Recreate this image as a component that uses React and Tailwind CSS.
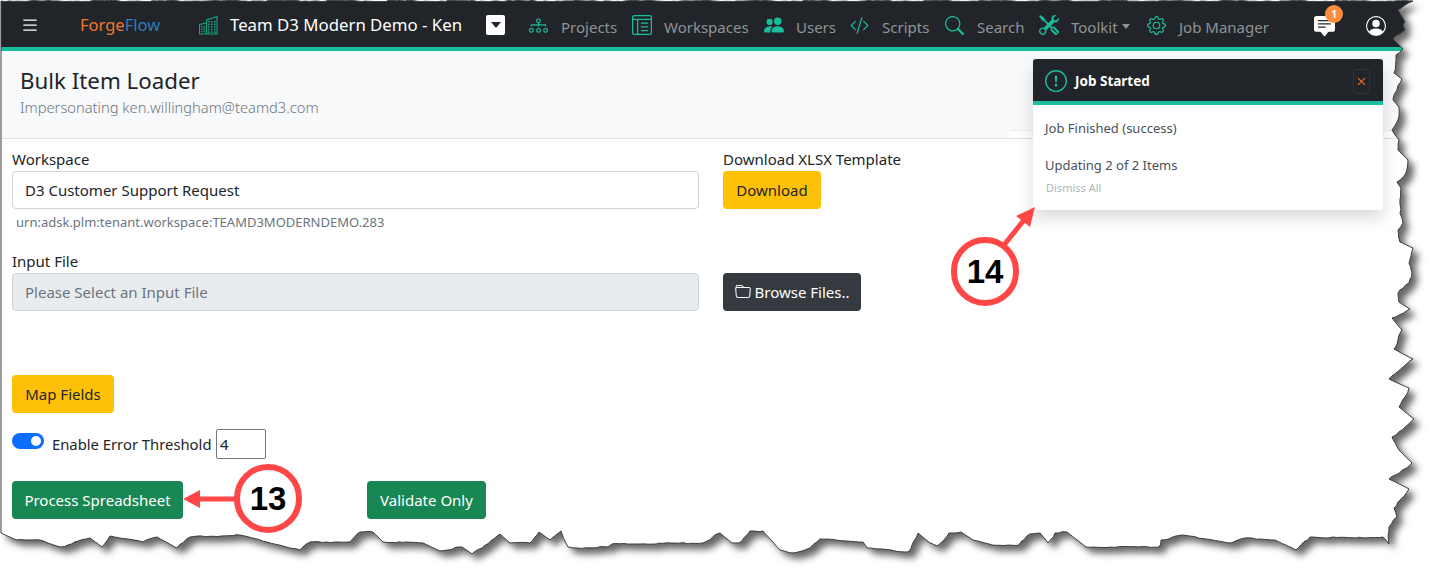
import {
  BsDiagram3,
  BsLayoutTextWindowReverse,
  BsPeopleFill,
  BsCodeSlash,
  BsSearch,
  BsTools,
  BsGear,
  BsChatSquareTextFill,
  BsPersonCircle,
  BsFolder,
  BsExclamationCircle,
  BsList,
  BsX,
} from "react-icons/bs"

// outline of the torn paper, clockwise from the top left
const edge = [
  [1413, 1], [1398, 10], [1405, 22], [1403, 25], [1405, 30], [1393, 39], [1403, 49], [1396, 55], [1396, 60],
  [1394, 73], [1402, 79], [1397, 90], [1393, 100], [1399, 107], [1398, 120], [1392, 130], [1399, 140], [1398, 150],
  [1408, 160], [1406, 173], [1397, 182], [1401, 188], [1400, 213], [1403, 223], [1398, 230], [1400, 242], [1413, 248],
  [1409, 263], [1412, 273], [1409, 283], [1398, 293], [1399, 302], [1410, 309], [1392, 318], [1402, 330], [1398, 340],
  [1394, 349], [1413, 359], [1389, 379], [1409, 388], [1405, 397], [1399, 407], [1414, 419], [1392, 437], [1399, 450],
  [1412, 463], [1389, 479], [1409, 489], [1398, 502], [1394, 508], [1397, 517], [1389, 527], [1389, 544], [1383, 537],
  [1356, 538], [1310, 537], [1296, 550], [1275, 540], [1245, 538], [1231, 543], [1183, 535], [1161, 540], [1159, 547],
  [1086, 547], [1067, 532], [1055, 533], [1048, 543], [1040, 533], [1030, 534], [1019, 545], [992, 545], [973, 540],
  [961, 532], [949, 533], [937, 546], [930, 543], [918, 533], [908, 552], [867, 548], [863, 542], [820, 539], [810, 548],
  [792, 553], [780, 550], [763, 531], [750, 531], [739, 543], [732, 543], [720, 533], [703, 543], [612, 544], [608, 547],
  [577, 548], [568, 547], [561, 531], [550, 540], [539, 532], [530, 543], [510, 543], [500, 534], [472, 554], [462, 547],
  [440, 551], [423, 543], [383, 542], [373, 532], [360, 532], [350, 542], [310, 542], [300, 550], [267, 542], [240, 535],
  [190, 537], [177, 548], [157, 537], [143, 542], [110, 536], [102, 547], [90, 538], [60, 547], [40, 540], [17, 540], [1, 533],
]

function roughPath(points) {
  let d = "M1 1"
  let n = 0
  let prev = [1, 1]
  for (const [x, y] of points) {
    const steps = Math.max(1, Math.round(Math.hypot(x - prev[0], y - prev[1]) / 4))
    for (let i = 1; i <= steps; i++) {
      n++
      const wob = i === steps ? 0 : ((Math.sin(n * 12.9898) * 43758.5453) % 1) * 0.8
      d += ` L${(prev[0] + ((x - prev[0]) * i) / steps + wob).toFixed(1)} ${(prev[1] + ((y - prev[1]) * i) / steps + wob * 0.8).toFixed(1)}`
    }
    prev = [x, y]
  }
  return d + " Z"
}

const pagePath = roughPath(edge)
const outsidePath = "M0 0 H1436 V575 H0 Z " + pagePath

function TornEdge() {
  return (
    <svg className="absolute left-0 top-0 pointer-events-none" width="1436" height="575">
      <defs>
        <filter id="blur" x="-5%" y="-5%" width="110%" height="110%">
          <feGaussianBlur stdDeviation="3.5" />
        </filter>
        <clipPath id="outside">
          <path d={outsidePath} clipRule="evenodd" />
        </clipPath>
      </defs>
      <path d={outsidePath} fill="#fff" fillRule="evenodd" />
      <g clipPath="url(#outside)">
        <path d={pagePath} fill="#666" filter="url(#blur)" transform="translate(6 6)" />
      </g>
      <path d={pagePath} fill="none" stroke="#3c3c3c" strokeWidth="1" />
      {/* arrows of the callouts */}
      <path d="M236 499 H198" stroke="#ff4747" strokeWidth="5" />
      <path d="M183 499 L200 490 V508 Z" fill="#ff4747" />
      <path d="M1004 245 L1024 220" stroke="#ff4747" strokeWidth="5" />
      <path d="M1035 207 L1030 227 L1016 216 Z" fill="#ff4747" />
    </svg>
  )
}

function Callout({ className, children }) {
  return (
    <div className={"absolute flex h-[69px] w-[68px] items-center justify-center rounded-full border-[6px] border-[#ff4747] bg-white font-['Liberation_Sans',sans-serif] text-[33px] font-bold text-black " + className}>
      {children}
    </div>
  )
}

// the two towers beside the tenant name
function BuildingIcon() {
  const windows = []
  for (let row = 0; row < 5; row++) {
    for (let col = 0; col < 3; col++) {
      windows.push(<rect key={row + "-" + col} x={9 + col * 3} y={5 + row * 2.6} width="1.6" height="1.5" />)
    }
  }
  for (let row = 0; row < 3; row++) {
    for (let col = 0; col < 2; col++) {
      windows.push(<rect key={"l" + row + "-" + col} x={2.2 + col * 2.4} y={10 + row * 2.4} width="1.4" height="1.4" />)
    }
  }
  return (
    <svg className="shrink-0 text-[#17a37f]" width="19" height="19" viewBox="0 0 19 19" fill="currentColor">
      <path d="M7.5 18 V4 L18 0.5 V18 Z M0.5 18 V8.5 L7.5 7 V18 Z" fill="none" stroke="currentColor" strokeWidth="1.1" />
      {windows}
    </svg>
  )
}

function NavItem({ icon: Icon, label, className, iconClass }) {
  return (
    <div className={"flex shrink-0 items-center text-[15px] text-[#909396] " + className}>
      <span className="flex w-[32px] shrink-0 items-center">
        <Icon className={"text-[#1abc9c] " + iconClass} />
      </span>
      <span className="translate-y-[2px]">{label}</span>
    </div>
  )
}

function Navbar() {
  return (
    <nav className="flex h-[51px] items-center border-b-4 border-[#1abc9c] bg-[#212529] pl-[20px] pt-[3px]">
      <BsList className="w-[20px] shrink-0 text-[20px] text-white" />
      <div className="ml-[40px] w-[119px] shrink-0 text-[16.5px] text-[#f0762c]">
        Forge<span className="text-[#2b7bbd]">Flow</span>
      </div>
      <BuildingIcon />
      <div className="ml-[12px] w-[256px] shrink-0 text-[16.8px] text-white">Team D3 Modern Demo - Ken</div>
      <div className="flex h-[20px] w-[19px] shrink-0 items-center justify-center rounded-[2px] bg-white">
        <div className="h-0 w-0 border-x-[5px] border-t-[6px] border-x-transparent border-t-[#212529]" />
      </div>
      <NavItem icon={BsDiagram3} label="Projects" iconClass="text-[19px]" className="ml-[24px] w-[103px]" />
      <NavItem icon={BsLayoutTextWindowReverse} label="Workspaces" iconClass="text-[20px]" className="w-[132px]" />
      <NavItem icon={BsPeopleFill} label="Users" iconClass="text-[20px]" className="w-[86px]" />
      <NavItem icon={BsCodeSlash} label="Scripts" iconClass="text-[19px]" className="w-[95px]" />
      <NavItem icon={BsSearch} label="Search" iconClass="text-[19px]" className="w-[94px]" />
      <NavItem icon={BsTools} label="Toolkit" iconClass="text-[20px]" className="w-[84px]" />
      <div className="mr-[17px] ml-[-1px] mt-[3px] h-0 w-0 shrink-0 border-x-[4px] border-t-[5px] border-x-transparent border-t-[#909396]" />
      <NavItem icon={BsGear} label="Job Manager" iconClass="text-[19px]" className="w-[167px]" />
      <div className="relative mt-[3px] w-[52px] shrink-0">
        <BsChatSquareTextFill className="text-[21px] text-white" />
        <span className="absolute left-[11px] top-[-11px] flex h-[18px] w-[18px] items-center justify-center rounded-full bg-[#fd8d3c] text-[10px] font-bold text-white">1</span>
      </div>
      <BsPersonCircle className="mt-[1px] shrink-0 text-[20px] text-white" />
    </nav>
  )
}

function Toast() {
  return (
    <div className="absolute left-[1033px] top-[59px] h-[151px] w-[350px] rounded-[3px] bg-white shadow-[0_8px_16px_rgba(0,0,0,0.15)]">
      <div className="flex h-[46px] items-center rounded-t-[3px] border-b-4 border-[#1abc9c] bg-[#212529] pl-[12px] pr-[13px] pt-[2px]">
        <BsExclamationCircle className="text-[22px] text-[#1abc9c]" />
        <div className="ml-[8px] text-[13.5px] font-bold text-white">Job Started</div>
        <div className="ml-auto flex h-[25px] w-[17px] items-center justify-center rounded-[3px] border border-[#2f343a] text-[#e8702a]">
          <BsX className="shrink-0 text-[17px]" />
        </div>
      </div>
      <div className="px-[12px] pt-[14px] text-[13px] leading-[18px] text-[#495057]">
        <div>Job Finished (success)</div>
        <div className="mt-[19px]">Updating 2 of 2 Items</div>
        <div className="ml-[1px] mt-[5px] text-[11px] text-[#adb5bd]">Dismiss All</div>
      </div>
    </div>
  )
}

function Button({ className, children }) {
  return (
    <button className={"flex h-[38px] shrink-0 items-center justify-center rounded-[4px] text-[15px] " + className}>
      {children}
    </button>
  )
}

function Field({ label, value, disabled }) {
  return (
    <div>
      <div className="h-[24px] text-[15px] leading-[24px] text-[#212529]">{label}</div>
      <div
        className={
          "flex h-[38px] items-center rounded-[4px] border border-[#ced4da] pl-[12px] text-[15px] " +
          (disabled ? "bg-[#e9ecef] text-[#6c757d]" : "bg-white text-[#212529]")
        }
      >
        {value}
      </div>
    </div>
  )
}

export default function App() {
  return (
    <div className="relative h-[575px] w-[1436px] overflow-hidden bg-white font-['Noto_Sans',sans-serif] text-[#212529]">
      <Navbar />

      <header className="flex">
        <div className="h-[88px] w-[1010px] shrink-0 border-b border-[#dee2e6] bg-[#f8f9fa] pl-[20px] pt-[14px]">
          <h1 className="text-[22.3px] leading-[32px]">Bulk Item Loader</h1>
          <div className="text-[14.7px] font-light leading-[20px] text-[#6c757d]">Impersonating ken.willingham@teamd3.com</div>
        </div>
        <div className="flex-1">
          <div className="h-[80px] border-b border-[#e9ecef] bg-[#f8f9fa]" />
          <div className="h-[8px] border-b border-[#dee2e6]" />
        </div>
      </header>

      <main className="pl-[12px] pt-[8px]">
        <div className="flex gap-[24px]">
          <div className="w-[687px] shrink-0">
            <Field label="Workspace" value="D3 Customer Support Request" />
            <div className="h-[26px] pl-[4px] text-[13px] leading-[26px] text-[#6c757d]">urn:adsk.plm:tenant.workspace:TEAMD3MODERNDEMO.283</div>
            <div className="mt-[14px]">
              <Field label="Input File" value="Please Select an Input File" disabled />
            </div>
          </div>
          <div>
            <div className="h-[24px] text-[15px] leading-[24px]">Download XLSX Template</div>
            <Button className="w-[98px] bg-[#ffc107] text-[#212529]">Download</Button>
            <Button className="mt-[64px] w-[138px] gap-[4px] bg-[#343a40] text-white">
              <BsFolder className="text-[16px]" />
              Browse Files..
            </Button>
          </div>
        </div>

        <Button className="mt-[64px] w-[102px] bg-[#ffc107] text-[#212529]">Map Fields</Button>

        <div className="mt-[16px] flex h-[30px] items-center">
          <div className="mb-[6px] flex h-[16px] w-[32px] items-center justify-end rounded-full bg-[#0d6efd] pr-[3px]">
            <div className="h-[10px] w-[10px] rounded-full bg-white" />
          </div>
          <span className="ml-[8px] w-[160px] whitespace-nowrap text-[14.8px]">Enable Error Threshold</span>
          <div className="ml-[4px] flex h-[30px] w-[50px] items-center rounded-[2px] border border-[#767676] pl-[3px] text-[15px]">4</div>
        </div>

        <div className="mt-[22px] flex">
          <Button className="w-[171px] bg-[#198754] text-white">Process Spreadsheet</Button>
          <Button className="ml-[184px] w-[119px] bg-[#198754] text-white">Validate Only</Button>
        </div>
      </main>

      <Toast />
      <TornEdge />
      <Callout className="left-[234px] top-[464px]">13</Callout>
      <Callout className="left-[951px] top-[237px]">14</Callout>
    </div>
  )
}
